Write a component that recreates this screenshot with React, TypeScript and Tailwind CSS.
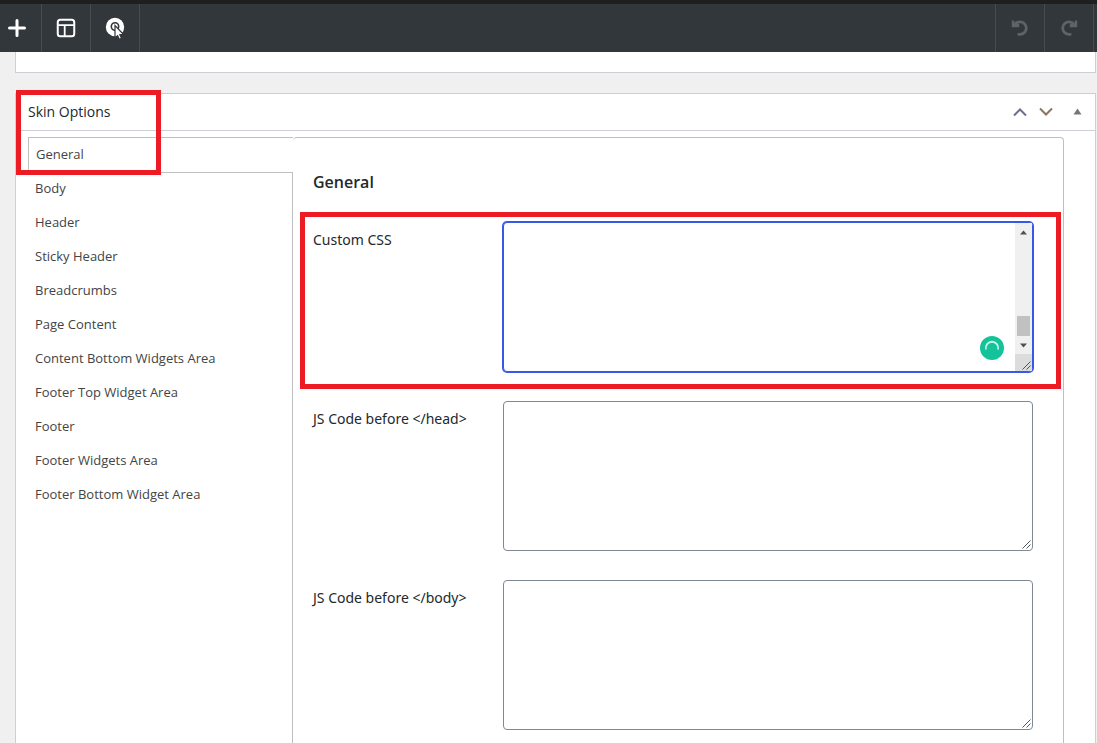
import { useState } from "react";

const SECTIONS = [
  "General",
  "Body",
  "Header",
  "Sticky Header",
  "Breadcrumbs",
  "Page Content",
  "Content Bottom Widgets Area",
  "Footer Top Widget Area",
  "Footer",
  "Footer Widgets Area",
  "Footer Bottom Widget Area",
];

const CODE_FIELDS = [
  { id: "js-head", label: "JS Code before </head>" },
  { id: "js-body", label: "JS Code before </body>" },
];

function PlusIcon() {
  return (
    <svg width="20" height="20" viewBox="0 0 20 20" aria-hidden="true">
      <path d="M10 2.5v15M2.5 10h15" stroke="#fff" strokeWidth="3" strokeLinecap="round" />
    </svg>
  );
}

function LayoutIcon() {
  return (
    <svg width="20" height="20" viewBox="0 0 20 20" fill="none" stroke="#fff" aria-hidden="true">
      <rect x="1.75" y="1.75" width="16.5" height="16.5" rx="2.5" strokeWidth="2" />
      <path d="M2 7.2h16M8.7 7.5V18" strokeWidth="1.8" />
    </svg>
  );
}

function PointerIcon() {
  return (
    <svg width="22" height="24" viewBox="0 0 22 24" fill="none" aria-hidden="true">
      <circle cx="11" cy="11" r="9.2" fill="#fff" />
      <circle cx="11" cy="10.5" r="3.7" stroke="#32373c" strokeWidth="1.6" />
      <path
        d="M11 9.5v12.3l2.6-2.2 1.7 3.6 2.2-1-1.7-3.4 3.6-.4z"
        fill="#fff"
        stroke="#32373c"
        strokeWidth="1.2"
      />
    </svg>
  );
}

function UndoIcon() {
  return (
    <svg width="18" height="18" viewBox="0 0 18 18" fill="none" stroke="#5f6367" aria-hidden="true">
      <path d="M3.6 5.2C5.2 3.5 7 2.8 9 2.8a6.3 6.3 0 1 1 0 12.6H6.6" strokeWidth="2.8" />
      <path d="M0.8 1.4h2.4v3.4h5v3.4H0.8z" fill="#5f6367" stroke="none" />
    </svg>
  );
}

function RedoIcon() {
  return (
    <svg width="18" height="18" viewBox="0 0 18 18" fill="none" stroke="#5f6367" aria-hidden="true">
      <path d="M14.4 5.2C12.8 3.5 11 2.8 9 2.8a6.3 6.3 0 1 0 0 12.6h2.4" strokeWidth="2.8" />
      <path d="M17.2 1.4h-2.4v3.4h-5v3.4h7.4z" fill="#5f6367" stroke="none" />
    </svg>
  );
}

function ResizeGrip() {
  return (
    <svg
      className="pointer-events-none absolute right-0.5 bottom-0.5"
      width="9"
      height="9"
      viewBox="0 0 9 9"
      aria-hidden="true"
    >
      <path d="M0.5 8.5l8-8M4.5 8.5l4-4" stroke="#555" strokeWidth="1" />
    </svg>
  );
}

export default function App() {
  const [active, setActive] = useState("General");

  return (
    <div className="flex h-screen flex-col overflow-hidden bg-[#f0f0f0] font-['Open_Sans',sans-serif] text-[#23282d]">
      <header className="flex h-[52px] shrink-0 justify-between border-t-4 border-[#1f1f1f] bg-[#32373c]">
        <div className="flex">
          <button
            aria-label="Add"
            className="flex w-[42px] items-center justify-center border-r border-[#464b50] pr-2"
          >
            <PlusIcon />
          </button>
          <button
            aria-label="Layout"
            className="flex w-[49px] items-center justify-center border-r border-[#464b50]"
          >
            <LayoutIcon />
          </button>
          <button
            aria-label="Inspect"
            className="flex w-[49px] items-center justify-center border-r border-[#464b50]"
          >
            <PointerIcon />
          </button>
        </div>
        <div className="flex pr-[3px]">
          <button
            aria-label="Undo"
            className="flex w-[49px] items-center justify-center border-l border-[#464b50]"
          >
            <UndoIcon />
          </button>
          <button
            aria-label="Redo"
            className="flex w-[50px] items-center justify-center border-x border-[#464b50]"
          >
            <RedoIcon />
          </button>
        </div>
      </header>

      <main className="flex flex-1 flex-col gap-5 overflow-hidden pr-px pl-[15px]">
        <div className="h-[21px] shrink-0 border-x border-b border-[#ccd0d4] bg-white" />

        <section className="relative flex flex-1 flex-col border-x border-t border-[#ccd0d4] bg-white">
          <div className="flex h-[37px] shrink-0 items-center justify-between border-b border-[#ccd0d4] pr-[13px] pl-3">
            <h2 className="text-sm font-medium">Skin Options</h2>
            <div className="flex items-center">
              <button aria-label="Move up" className="mr-3">
                <svg width="14" height="10" viewBox="0 0 14 10" fill="none">
                  <path d="M1 8.5l6-6 6 6" stroke="#6b7090" strokeWidth="2" />
                </svg>
              </button>
              <button aria-label="Move down" className="mr-5">
                <svg width="14" height="10" viewBox="0 0 14 10" fill="none">
                  <path d="M1 1.5l6 6 6-6" stroke="#8a7460" strokeWidth="2" />
                </svg>
              </button>
              <button aria-label="Toggle panel">
                <svg width="9" height="9" viewBox="0 0 9 9">
                  <path d="M4.5 0.5L8.5 6.5h-8z" fill="#72777c" />
                </svg>
              </button>
            </div>
          </div>

          <div className="flex flex-1 pt-1.5 pr-[31px] pl-3">
            <nav className="flex w-[265px] shrink-0 flex-col text-[13px] text-[#444]">
              {SECTIONS.map((name) => (
                <button
                  key={name}
                  onClick={() => setActive(name)}
                  className={
                    name === active
                      ? "h-9 shrink-0 border-y border-l border-[#bfbfbf] pl-[7px] text-left"
                      : "h-[34px] shrink-0 border-r border-[#bfbfbf] pb-0.5 pl-[7px] text-left"
                  }
                >
                  {name}
                </button>
              ))}
              <div className="flex-1 border-r border-[#bfbfbf]" />
            </nav>

            <div className="flex-1 rounded-t border-t border-r border-[#bfbfbf] pt-8 pr-[30px] pl-5">
              <h3 className="text-base leading-6 font-semibold">{active}</h3>

              <div className="relative mt-7 flex">
                <label
                  htmlFor="custom-css"
                  className="w-[190px] shrink-0 pt-2 font-['Noto_Sans',sans-serif] text-sm"
                >
                  Custom CSS
                </label>
                <div className="relative flex-1">
                  <textarea
                    id="custom-css"
                    className="block h-[150px] w-full resize-none rounded border border-[#3858e9] bg-white p-2 text-sm ring-1 ring-[#3858e9] outline-none"
                  />
                  {/* scrollbar */}
                  <div className="pointer-events-none absolute inset-y-px right-px flex w-[17px] flex-col bg-[#f0f0f0]">
                    <svg className="mt-1.5 ml-1" width="9" height="7" viewBox="0 0 9 7">
                      <path d="M4.5 1.5L8 5.5H1z" fill="#505050" />
                    </svg>
                    <div className="mt-20 ml-0.5 h-5 w-[13px] bg-[#c1c1c1]" />
                    <svg className="mt-1.5 ml-1" width="9" height="7" viewBox="0 0 9 7">
                      <path d="M4.5 5.5L8 1.5H1z" fill="#505050" />
                    </svg>
                    <div className="mt-auto h-[17px] bg-[#dcdcdc]" />
                  </div>
                  <svg
                    className="pointer-events-none absolute right-[29px] bottom-3"
                    width="24"
                    height="24"
                    viewBox="0 0 24 24"
                    fill="none"
                  >
                    <circle cx="12" cy="12" r="12" fill="#15c39a" />
                    <path d="M6 13.5a6.2 6.2 0 1 1 12 0" stroke="#c9f2e6" strokeWidth="1.8" />
                  </svg>
                  <ResizeGrip />
                </div>
                <div className="pointer-events-none absolute -top-2.5 -right-7 -bottom-[17px] -left-[13px] border-5 border-[#ed1c24]" />
              </div>

              {CODE_FIELDS.map((field) => (
                <div key={field.id} className="mt-[29px] flex">
                  <label
                    htmlFor={field.id}
                    className="w-[190px] shrink-0 pt-2 font-['Noto_Sans',sans-serif] text-sm"
                  >
                    {field.label}
                  </label>
                  <div className="relative flex-1">
                    <textarea
                      id={field.id}
                      className="block h-[150px] w-full resize-none rounded border border-[#7e8993] bg-white p-2 text-sm outline-none"
                    />
                    <ResizeGrip />
                  </div>
                </div>
              ))}
            </div>
          </div>

          <div className="pointer-events-none absolute -top-1 left-0 h-[85px] w-[145px] border-5 border-[#ed1c24]" />
        </section>
      </main>
    </div>
  );
}
